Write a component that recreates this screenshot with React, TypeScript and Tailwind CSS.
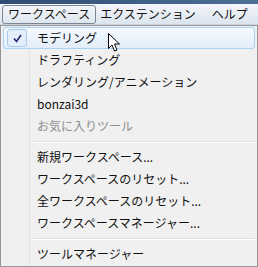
import React from "react";

const font = { fontFamily: '"Noto Sans CJK JP", "Noto Sans", sans-serif' };

type Item = { label: string; checked?: boolean; disabled?: boolean; hover?: boolean } | "sep";

const items: Item[] = [
  { label: "モデリング", checked: true, hover: true },
  { label: "ドラフティング" },
  { label: "レンダリング/アニメーション" },
  { label: "bonzai3d" },
  { label: "お気に入りツール", disabled: true },
  "sep",
  { label: "新規ワークスペース..." },
  { label: "ワークスペースのリセット..." },
  { label: "全ワークスペースのリセット..." },
  { label: "ワークスペースマネージャー..." },
  "sep",
  { label: "ツールマネージャー" },
];

function Cursor() {
  return (
    <svg width="13" height="20" viewBox="0 0 13 20" className="absolute left-[108px] top-[33px]">
      <path d="M0.5 0.5 L0.5 15.5 L4 12 L6.5 18 L9 17 L6.5 11 L11.5 11 Z" fill="#fff" stroke="#000" strokeWidth="1" />
    </svg>
  );
}

export default function App() {
  return (
    <div className="w-[258px] h-[267px] overflow-hidden relative bg-[#f0f0f0] text-[12px] text-[#111]" style={font}>
      <div className="h-[4px] bg-gradient-to-r from-[#2e4d74] to-[#4d6f96]" />
      <div className="h-[21px] flex items-center bg-gradient-to-b from-[#f4f7fb] to-[#dce4ee] border-b border-[#c9d3df]">
        <div className="ml-[2px] h-[19px] px-[5px] flex items-center rounded-[3px] border border-[#7a8696] bg-gradient-to-b from-[#f3f6fa] to-[#dfe6ef] leading-none">
          ワークスペース
        </div>
        <div className="ml-[4px] leading-none">エクステンション</div>
        <div className="ml-[16px] leading-none">ヘルプ</div>
      </div>
      <div className="relative h-[242px] border border-[#979797] bg-[#f0f0f0] pt-[1px] px-[2px]">
        <div className="absolute left-[28px] top-0 bottom-0 w-[2px] border-l border-[#e2e3e3] border-r-white" />
        {items.map((it, i) =>
          it === "sep" ? (
            <div key={i} className="h-[9px] flex items-center pl-[30px]">
              <div className="w-full h-[2px] border-t border-[#e0e0e0] border-b border-b-white" />
            </div>
          ) : (
            <div
              key={i}
              className={
                "relative h-[22px] flex items-center pl-[33px] rounded-[3px] border " +
                (it.hover
                  ? "border-[#a9d3f2] bg-gradient-to-b from-[#f4f9fe] to-[#e3eefa]"
                  : "border-transparent") +
                (it.disabled ? " text-[#8d8d8d]" : "")
              }
            >
              {it.checked && (
                <div className="absolute left-[3px] top-[1px] w-[20px] h-[18px] rounded-[3px] border border-[#a9c9ec] bg-[#e4eefb] flex items-center justify-center">
                  <svg width="9" height="9" viewBox="0 0 9 9">
                    <path d="M1 4.5 L3.5 7.5 L8 1" fill="none" stroke="#1c2c70" strokeWidth="1.6" />
                  </svg>
                </div>
              )}
              <span className="leading-none">{it.label}</span>
            </div>
          )
        )}
      </div>
      <Cursor />
    </div>
  );
}
